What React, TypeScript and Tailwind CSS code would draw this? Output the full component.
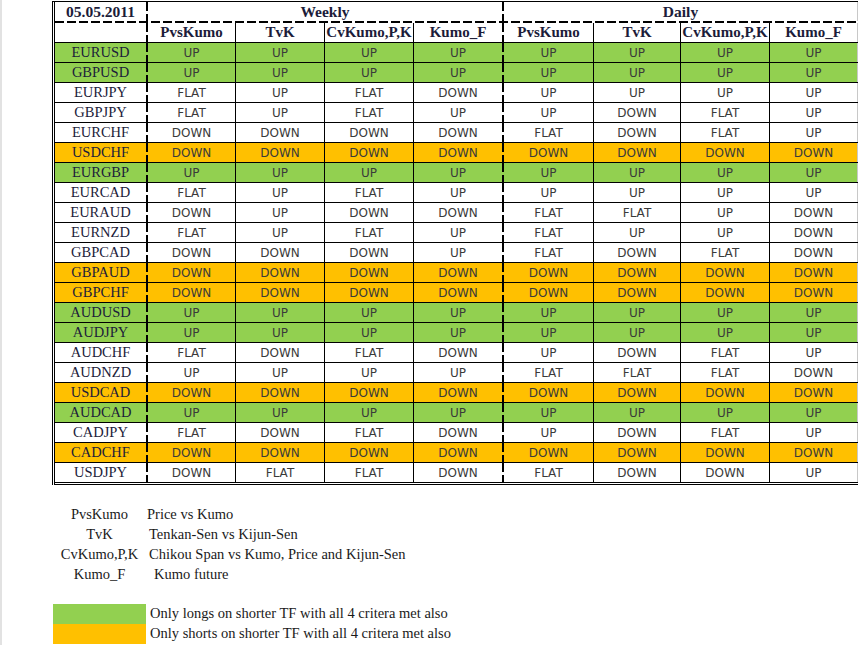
const serif = "font-['Liberation_Serif','Times_New_Roman',serif]";
const sans = "font-['DejaVu_Sans','Verdana',sans-serif]";

type Row = { pair: string; bg: string; w: string[]; d: string[] };

const GREEN = "bg-[#92d050]";
const ORANGE = "bg-[#ffc000]";
const WHITE = "bg-white";

const rows: Row[] = [
  { pair: "EURUSD", bg: GREEN, w: ["UP", "UP", "UP", "UP"], d: ["UP", "UP", "UP", "UP"] },
  { pair: "GBPUSD", bg: GREEN, w: ["UP", "UP", "UP", "UP"], d: ["UP", "UP", "UP", "UP"] },
  { pair: "EURJPY", bg: WHITE, w: ["FLAT", "UP", "FLAT", "DOWN"], d: ["UP", "UP", "UP", "UP"] },
  { pair: "GBPJPY", bg: WHITE, w: ["FLAT", "UP", "FLAT", "UP"], d: ["UP", "DOWN", "FLAT", "UP"] },
  { pair: "EURCHF", bg: WHITE, w: ["DOWN", "DOWN", "DOWN", "DOWN"], d: ["FLAT", "DOWN", "FLAT", "UP"] },
  { pair: "USDCHF", bg: ORANGE, w: ["DOWN", "DOWN", "DOWN", "DOWN"], d: ["DOWN", "DOWN", "DOWN", "DOWN"] },
  { pair: "EURGBP", bg: GREEN, w: ["UP", "UP", "UP", "UP"], d: ["UP", "UP", "UP", "UP"] },
  { pair: "EURCAD", bg: WHITE, w: ["FLAT", "UP", "FLAT", "UP"], d: ["UP", "UP", "UP", "UP"] },
  { pair: "EURAUD", bg: WHITE, w: ["DOWN", "UP", "DOWN", "DOWN"], d: ["FLAT", "FLAT", "UP", "DOWN"] },
  { pair: "EURNZD", bg: WHITE, w: ["FLAT", "UP", "FLAT", "UP"], d: ["FLAT", "UP", "UP", "DOWN"] },
  { pair: "GBPCAD", bg: WHITE, w: ["DOWN", "DOWN", "DOWN", "UP"], d: ["FLAT", "DOWN", "FLAT", "DOWN"] },
  { pair: "GBPAUD", bg: ORANGE, w: ["DOWN", "DOWN", "DOWN", "DOWN"], d: ["DOWN", "DOWN", "DOWN", "DOWN"] },
  { pair: "GBPCHF", bg: ORANGE, w: ["DOWN", "DOWN", "DOWN", "DOWN"], d: ["DOWN", "DOWN", "DOWN", "DOWN"] },
  { pair: "AUDUSD", bg: GREEN, w: ["UP", "UP", "UP", "UP"], d: ["UP", "UP", "UP", "UP"] },
  { pair: "AUDJPY", bg: GREEN, w: ["UP", "UP", "UP", "UP"], d: ["UP", "UP", "UP", "UP"] },
  { pair: "AUDCHF", bg: WHITE, w: ["FLAT", "DOWN", "FLAT", "DOWN"], d: ["UP", "DOWN", "FLAT", "UP"] },
  { pair: "AUDNZD", bg: WHITE, w: ["UP", "UP", "UP", "UP"], d: ["FLAT", "FLAT", "FLAT", "DOWN"] },
  { pair: "USDCAD", bg: ORANGE, w: ["DOWN", "DOWN", "DOWN", "DOWN"], d: ["DOWN", "DOWN", "DOWN", "DOWN"] },
  { pair: "AUDCAD", bg: GREEN, w: ["UP", "UP", "UP", "UP"], d: ["UP", "UP", "UP", "UP"] },
  { pair: "CADJPY", bg: WHITE, w: ["FLAT", "DOWN", "FLAT", "DOWN"], d: ["UP", "DOWN", "FLAT", "UP"] },
  { pair: "CADCHF", bg: ORANGE, w: ["DOWN", "DOWN", "DOWN", "DOWN"], d: ["DOWN", "DOWN", "DOWN", "DOWN"] },
  { pair: "USDJPY", bg: WHITE, w: ["DOWN", "FLAT", "FLAT", "DOWN"], d: ["FLAT", "DOWN", "DOWN", "UP"] },
];

// column widths incl. right border line
const weeklyCols = [
  "w-[88px] border-r border-black",
  "w-[89px] border-r border-black",
  "w-[89px] border-r border-black",
  "w-[88px]",
];
const dailyCols = [
  "w-[90px] border-r border-black",
  "w-[87px] border-r border-black",
  "w-[89px] border-r border-black",
  "w-[88px] border-r border-[#c8c8c8]",
];

const headers = ["PvsKumo", "TvK", "CvKumo,P,K", "Kumo_F"];

function VDash() {
  return (
    <div className="w-[2px] shrink-0 self-stretch bg-[image:repeating-linear-gradient(180deg,#000_0px,#000_9px,transparent_9px,transparent_12px)]" />
  );
}

function Cell({ cls, children }: { cls: string; children?: React.ReactNode }) {
  return (
    <div className={`${cls} shrink-0 flex items-center justify-center`}>{children}</div>
  );
}

function DataRow({ row, last }: { row: Row; last: boolean }) {
  return (
    <div
      className={`flex ${row.bg} ${
        last ? "h-[22px] border-b-[3px] border-double border-black" : "h-[20px] border-b border-black"
      }`}
    >
      <Cell cls={`w-[91px] ${serif} text-[14.5px] leading-none text-[#1c1c3a]`}>{row.pair}</Cell>
      <VDash />
      {row.w.map((v, i) => (
        <Cell key={i} cls={`${weeklyCols[i]} ${sans} text-[12px] leading-none text-[#3a3a3a]`}>
          {v}
        </Cell>
      ))}
      <VDash />
      {row.d.map((v, i) => (
        <Cell key={i} cls={`${dailyCols[i]} ${sans} text-[12px] leading-none text-[#3a3a3a]`}>
          {v}
        </Cell>
      ))}
    </div>
  );
}

const legend = [
  { term: "PvsKumo", desc: "Price vs Kumo", pad: "pl-[1px]" },
  { term: "TvK", desc: "Tenkan-Sen vs Kijun-Sen", pad: "pl-[3px]" },
  { term: "CvKumo,P,K", desc: "Chikou Span vs Kumo, Price and Kijun-Sen", pad: "pl-[3px]" },
  { term: "Kumo_F", desc: "Kumo future", pad: "pl-[8px]" },
];

export default function App() {
  return (
    <div className="min-h-screen w-[859px] bg-white border-l-2 border-[#e2e2e2] pt-[1px] overflow-hidden">
      {/* Signal table */}
      <div className="ml-[50px] w-[806px] border-l-[3px] border-double border-black border-t border-t-black">
        <div className={`flex h-[19px] ${serif} font-bold text-[15.5px] leading-none text-[#1c1c3a]`}>
          <Cell cls="w-[91px]">05.05.2011</Cell>
          <VDash />
          <Cell cls="w-[354px]">Weekly</Cell>
          <VDash />
          <Cell cls="w-[354px] border-r border-[#c8c8c8]">Daily</Cell>
        </div>
        <div className="h-[2px] bg-[image:repeating-linear-gradient(90deg,#000_0px,#000_9px,transparent_9px,transparent_12px)]" />
        <div className={`flex h-[20px] border-b border-black ${serif} font-bold text-[15px] leading-none text-[#1c1c3a]`}>
          <Cell cls="w-[91px]" />
          <VDash />
          {headers.map((h, i) => (
            <Cell key={i} cls={weeklyCols[i]}>
              {h}
            </Cell>
          ))}
          <VDash />
          {headers.map((h, i) => (
            <Cell key={i} cls={dailyCols[i]}>
              {h}
            </Cell>
          ))}
        </div>
        {rows.map((r, i) => (
          <DataRow key={r.pair} row={r} last={i === rows.length - 1} />
        ))}
      </div>

      {/* Abbreviations */}
      <div className={`ml-[51px] mt-[20px] ${serif} text-[14.5px] text-[#1a1a1a]`}>
        {legend.map((l) => (
          <div key={l.term} className="flex h-[20px] items-center">
            <div className="w-[93px] text-center">{l.term}</div>
            <div className={l.pad}>{l.desc}</div>
          </div>
        ))}
      </div>

      {/* Colour key */}
      <div className={`ml-[51px] mt-[19px] ${serif} text-[14.5px] text-[#1a1a1a]`}>
        <div className="flex h-[20px] items-center">
          <div className={`w-[93px] h-full ${GREEN}`} />
          <div className="pl-[4px]">Only longs on shorter TF with all 4 critera met also</div>
        </div>
        <div className="flex h-[20px] items-center">
          <div className={`w-[93px] h-full ${ORANGE}`} />
          <div className="pl-[4px]">Only shorts on shorter TF with all 4 critera met also</div>
        </div>
      </div>
    </div>
  );
}
